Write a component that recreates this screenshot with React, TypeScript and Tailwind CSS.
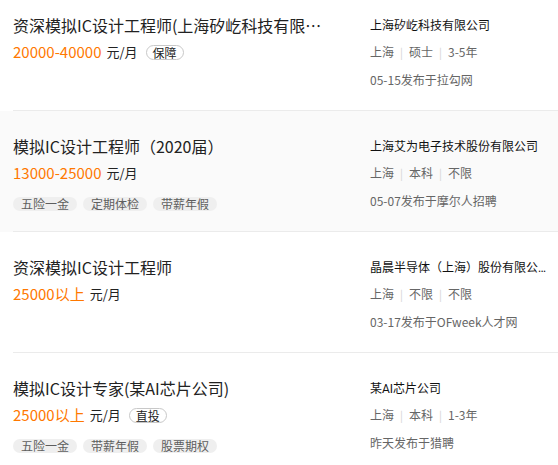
const font = "font-['Noto_Sans_CJK_SC','Noto_Sans',sans-serif]"

interface Job {
  title: string
  salary: string
  badge?: string
  tags?: string[]
  company: string
  meta: string[]
  posted: string
  active?: boolean
}

const jobs: Job[] = [
  {
    title: "资深模拟IC设计工程师(上海矽屹科技有限公司)",
    salary: "20000-40000",
    badge: "保障",
    company: "上海矽屹科技有限公司",
    meta: ["上海", "硕士", "3-5年"],
    posted: "05-15发布于拉勾网",
  },
  {
    title: "模拟IC设计工程师（2020届）",
    salary: "13000-25000",
    tags: ["五险一金", "定期体检", "带薪年假"],
    company: "上海艾为电子技术股份有限公司",
    meta: ["上海", "本科", "不限"],
    posted: "05-07发布于摩尔人招聘",
    active: true,
  },
  {
    title: "资深模拟IC设计工程师",
    salary: "25000以上",
    company: "晶晨半导体（上海）股份有限公司",
    meta: ["上海", "不限", "不限"],
    posted: "03-17发布于OFweek人才网",
  },
  {
    title: "模拟IC设计专家(某AI芯片公司)",
    salary: "25000以上",
    badge: "直投",
    tags: ["五险一金", "带薪年假", "股票期权"],
    company: "某AI芯片公司",
    meta: ["上海", "本科", "1-3年"],
    posted: "昨天发布于猎聘",
  },
]

function JobRow({ job }: { job: Job }) {
  return (
    <div className={`h-[121px] ${job.active ? "bg-[#fafafa]" : "bg-white"}`}>
      <div className="ml-[13px] h-full border-b border-[#ebebeb] flex">
        <div className="w-[357px] pt-[24px]">
          <div className="w-[316px] truncate text-[16px] leading-[22px] text-[#222]">{job.title}</div>
          <div className="mt-[6px] h-[20px] flex items-center">
            <span className="text-[15px] leading-[20px] text-[#ff7800]">{job.salary}</span>
            <span className="ml-[5px] text-[13px] leading-[20px] text-[#222]">元/月</span>
            {job.badge && (
              <span className="ml-[8px] h-[15px] px-[6px] rounded-full border border-[#c8c8c8] text-[12px] leading-[13px] text-[#222]">
                {job.badge}
              </span>
            )}
          </div>
          {job.tags && (
            <div className="mt-[14px] flex gap-[6px]">
              {job.tags.map((t) => (
                <span key={t} className="h-[14px] px-[8px] rounded-full bg-[#efefef] text-[12px] leading-[14px] text-[#5e5e5e]">
                  {t}
                </span>
              ))}
            </div>
          )}
        </div>
        <div className="w-[178px] pt-[27px] text-[12px]">
          <div className="truncate leading-[18px] text-[#111] font-['Roboto','Noto_Sans_CJK_SC',sans-serif]">
            {job.company}
          </div>
          <div className="mt-[8px] leading-[18px] text-[#666] flex items-center">
            {job.meta.map((m, i) => (
              <span key={i} className="flex items-center">
                {i > 0 && <span className="mx-[6px] text-[#d4d4d4] text-[11px]">|</span>}
                {m}
              </span>
            ))}
          </div>
          <div className="mt-[10px] leading-[18px] text-[#666]">{job.posted}</div>
        </div>
      </div>
    </div>
  )
}

export default function App() {
  return (
    <div className={`w-[558px] h-[465px] overflow-hidden bg-white ${font}`}>
      <div className="-mt-[10px]">
        {jobs.map((j, i) => (
          <JobRow key={i} job={j} />
        ))}
      </div>
    </div>
  )
}
